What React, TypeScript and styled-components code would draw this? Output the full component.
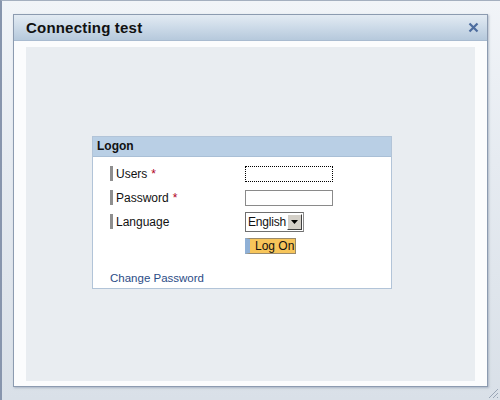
import React from "react";
import styled, { createGlobalStyle } from "styled-components";

const GlobalStyle = createGlobalStyle`
  html, body { margin: 0; padding: 0; }
  body { font-family: "Liberation Sans", Arial, sans-serif; }
`;

const Frame = styled.div`
  position: relative;
  width: 500px;
  height: 400px;
  box-sizing: border-box;
  padding: 13px 12px 13px 11px;
  display: flex;
  border-top: 1px solid #a4afbf;
  border-left: 2px solid #8795ad;
  background: linear-gradient(180deg, #f1f4f8 0%, #e6ebf1 40%, #d9e0e8 100%);
  overflow: hidden;
`;

const Dialog = styled.div`
  flex: 1;
  display: flex;
  flex-direction: column;
  border: 1px solid #8c9bb0;
  background: #fff;
  box-shadow: 1px 1px 2px rgba(120, 135, 160, 0.5);
`;

const TitleBar = styled.div`
  height: 25px;
  display: flex;
  align-items: center;
  justify-content: space-between;
  padding: 0 8px 0 12px;
  background: linear-gradient(180deg, #e3ebf3 0%, #ccdae8 50%, #b6c9dc 100%);
  border-bottom: 1px solid #a9bbd0;
`;

const Title = styled.span`
  font-size: 15px;
  font-weight: bold;
  color: #111;
  letter-spacing: 0.2px;
`;

const CloseButton = styled.button`
  border: 0;
  padding: 0;
  background: none;
  display: flex;
  cursor: pointer;
`;

const Content = styled.div`
  flex: 1;
  display: flex;
  padding: 6px 12px 5px 12px;
  background: #fbfcfd;
`;

const Pane = styled.div`
  flex: 1;
  display: flex;
  align-items: center;
  padding-left: 66px;
  background: #e9edf1;
`;

const LogonBox = styled.div`
  width: 298px;
  margin-top: -4px;
  border: 1px solid #b2c4d8;
  background: #fff;
`;

const BoxHeader = styled.div`
  height: 19px;
  display: flex;
  align-items: center;
  padding-left: 4px;
  background: #b9cfe5;
  border-bottom: 1px solid #a9bfd6;
  font-size: 12px;
  font-weight: bold;
  color: #111;
`;

const BoxBody = styled.div`
  padding: 5px 0 2px 17px;
`;

const FormGrid = styled.div`
  display: grid;
  grid-template-columns: 135px 1fr;
  grid-auto-rows: 24px;
  align-items: center;
`;

const Label = styled.label`
  display: flex;
  align-items: center;
  font-size: 12px;
  color: #111;
  &::before {
    content: "";
    width: 3px;
    height: 15px;
    margin-right: 3px;
    background: #8f8f8f;
  }
`;

const Required = styled.span`
  color: #b0001c;
  margin-left: 4px;
`;

const TextInput = styled.input<{ $focused?: boolean }>`
  box-sizing: border-box;
  width: 88px;
  height: 16px;
  margin: 0;
  padding: 0 2px;
  font-size: 12px;
  border: 1px solid #8a8a8a;
  outline: none;
  ${(p) => p.$focused && "border: 1px dotted #000;"}
`;

const Select = styled.div`
  box-sizing: border-box;
  width: 59px;
  height: 20px;
  display: flex;
  align-items: center;
  justify-content: space-between;
  border: 1px solid #6f6f6f;
  border-right-color: #8a8a8a;
  background: #fff;
  font-size: 12px;
  letter-spacing: -0.2px;
  color: #111;
  padding-left: 2px;
`;

const SelectArrow = styled.span`
  width: 15px;
  height: 16px;
  margin-right: 1px;
  display: flex;
  align-items: center;
  justify-content: center;
  background: #d4d0c8;
  border: 1px solid;
  border-color: #fff #404040 #404040 #fff;
  box-sizing: border-box;
`;

const LogOnButton = styled.button`
  box-sizing: border-box;
  width: 51px;
  height: 16px;
  padding: 0 0 0 5px;
  font-family: inherit;
  font-size: 12px;
  color: #111;
  background: #f7c55a;
  border: 1px solid #9a8a6a;
  border-left: 5px solid #8fb0d6;
  cursor: pointer;
  text-align: left;
`;

const Empty = styled.span``;

const ChangeLink = styled.a`
  display: inline-block;
  margin-top: 13px;
  font-size: 11.5px;
  color: #2b4c86;
  text-decoration: none;
  line-height: 14px;
`;

const Grip = styled.svg`
  position: absolute;
  right: 1px;
  bottom: 1px;
`;

export default function App() {
  return (
    <>
      <GlobalStyle />
      <Frame>
        <Dialog>
          <TitleBar>
            <Title>Connecting test</Title>
            <CloseButton aria-label="Close">
              <svg width="11" height="11" viewBox="0 0 11 11">
                <path d="M1.5 1.5 L9.5 9.5 M9.5 1.5 L1.5 9.5" stroke="#4d6c9e" strokeWidth="2.2" />
              </svg>
            </CloseButton>
          </TitleBar>
          <Content>
            <Pane>
              <LogonBox>
                <BoxHeader>Logon</BoxHeader>
                <BoxBody>
                  <FormGrid>
                    <Label>
                      Users<Required>*</Required>
                    </Label>
                    <TextInput $focused />
                    <Label>
                      Password<Required>*</Required>
                    </Label>
                    <TextInput type="password" />
                    <Label>Language</Label>
                    <Select>
                      English
                      <SelectArrow>
                        <svg width="7" height="4" viewBox="0 0 7 4">
                          <path d="M0 0 H7 L3.5 4 Z" fill="#000" />
                        </svg>
                      </SelectArrow>
                    </Select>
                    <Empty />
                    <LogOnButton>Log On</LogOnButton>
                  </FormGrid>
                  <ChangeLink href="#">Change Password</ChangeLink>
                </BoxBody>
              </LogonBox>
            </Pane>
          </Content>
        </Dialog>
        <Grip width="12" height="12" viewBox="0 0 12 12">
          <path d="M11 2 L2 11 M11 6 L6 11 M11 10 L10 11" stroke="#9aa6b6" strokeWidth="1" />
        </Grip>
      </Frame>
    </>
  );
}
